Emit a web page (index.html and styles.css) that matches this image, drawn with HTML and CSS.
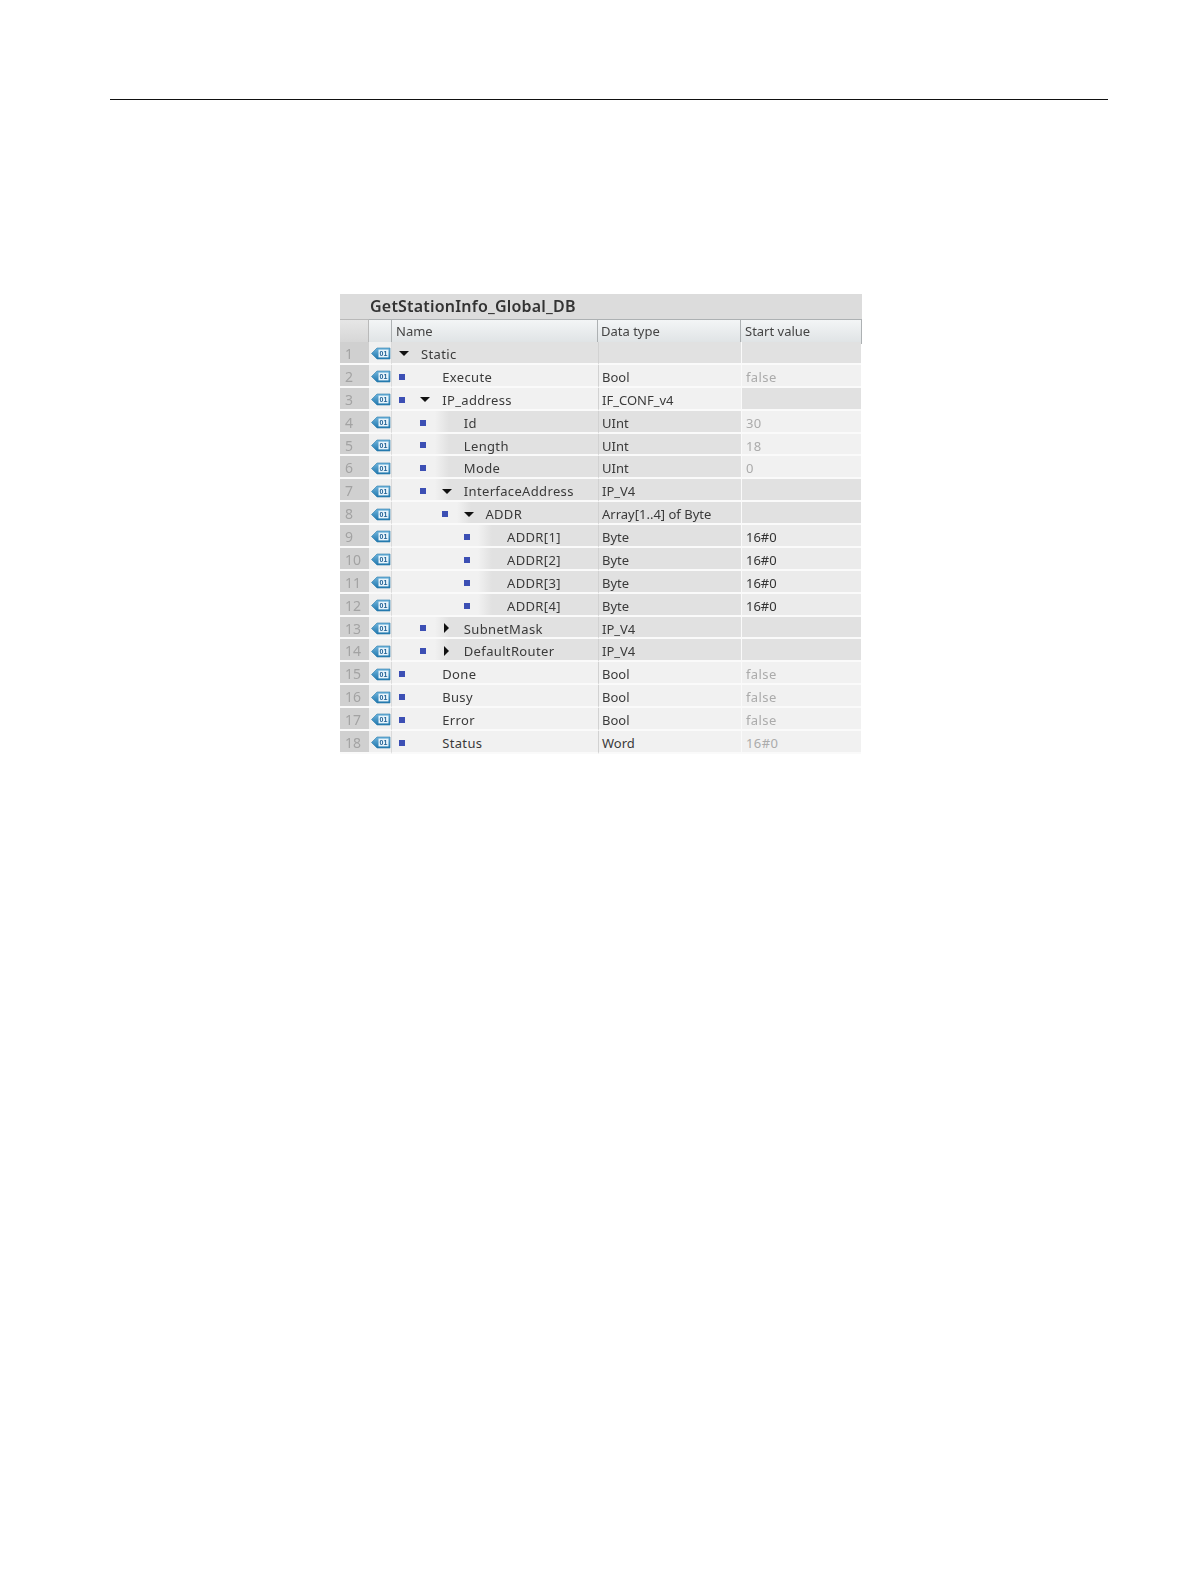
FILE: index.html
```html
<!DOCTYPE html>
<html lang="en">
<head>
<meta charset="utf-8">
<title>GetStationInfo_Global_DB</title>
<link rel="stylesheet" href="styles.css">
</head>
<body>
<svg class="defs" width="0" height="0" aria-hidden="true">
  <defs>
    <linearGradient id="tagfill" x1="0" y1="0" x2="0" y2="1">
      <stop offset="0" stop-color="#6fb4dc"/>
      <stop offset="1" stop-color="#1f76ad"/>
    </linearGradient>
    <symbol id="tag" viewBox="0 0 20 13">
      <path d="M0.5 6.5 L6 1 H19 V12 H6 Z" fill="url(#tagfill)" stroke="#2b7cab" stroke-width="0.6"/>
      <rect x="7.5" y="2.6" width="10" height="7.8" fill="#e8f4fb"/>
      <text x="12.5" y="9.3" text-anchor="middle" font-family="Liberation Sans, sans-serif" font-size="7" font-weight="700" fill="#1f5f93">01</text>
    </symbol>
  </defs>
</svg>
<div class="rule"></div>
<main class="db">
  <div class="title">GetStationInfo_Global_DB</div>
  <div class="head">
    <div class="h h-num"></div>
    <div class="h h-icon"></div>
    <div class="h">Name</div>
    <div class="h h-type">Data type</div>
    <div class="h">Start value</div>
  </div>

  <div class="row">
    <div class="num">1</div><div class="ico"><svg class="tag"><use href="#tag"/></svg></div>
    <div class="name dark"><span class="arrow down"></span><span class="label">Static</span></div>
    <div class="type dark"></div><div class="start dark"></div>
  </div>
  <div class="row">
    <div class="num">2</div><div class="ico"><svg class="tag"><use href="#tag"/></svg></div>
    <div class="name"><span class="slot"><i class="dot"></i></span><span class="slot"></span><span class="label">Execute</span></div>
    <div class="type"><span>Bool</span></div><div class="start muted">false</div>
  </div>
  <div class="row">
    <div class="num">3</div><div class="ico"><svg class="tag"><use href="#tag"/></svg></div>
    <div class="name"><span class="slot"><i class="dot"></i></span><span class="slot"><span class="arrow down"></span></span><span class="label">IP_address</span></div>
    <div class="type">IF_CONF_v4</div><div class="start dark"></div>
  </div>
  <div class="row">
    <div class="num">4</div><div class="ico"><svg class="tag"><use href="#tag"/></svg></div>
    <div class="name l1"><span class="slot"><i class="dot"></i></span><div class="inner"><span class="slot"></span><span class="label">Id</span></div></div>
    <div class="type dark">UInt</div><div class="start muted">30</div>
  </div>
  <div class="row">
    <div class="num">5</div><div class="ico"><svg class="tag"><use href="#tag"/></svg></div>
    <div class="name l1"><span class="slot"><i class="dot"></i></span><div class="inner"><span class="slot"></span><span class="label">Length</span></div></div>
    <div class="type dark">UInt</div><div class="start muted">18</div>
  </div>
  <div class="row">
    <div class="num">6</div><div class="ico"><svg class="tag"><use href="#tag"/></svg></div>
    <div class="name l1"><span class="slot"><i class="dot"></i></span><div class="inner"><span class="slot"></span><span class="label">Mode</span></div></div>
    <div class="type dark">UInt</div><div class="start muted">0</div>
  </div>
  <div class="row">
    <div class="num">7</div><div class="ico"><svg class="tag"><use href="#tag"/></svg></div>
    <div class="name l1"><span class="slot"><i class="dot"></i></span><div class="inner"><span class="slot"><span class="arrow down"></span></span><span class="label">InterfaceAddress</span></div></div>
    <div class="type dark">IP_V4</div><div class="start dark"></div>
  </div>
  <div class="row">
    <div class="num">8</div><div class="ico"><svg class="tag"><use href="#tag"/></svg></div>
    <div class="name l2"><span class="slot"><i class="dot"></i></span><div class="inner"><span class="slot"><span class="arrow down"></span></span><span class="label">ADDR</span></div></div>
    <div class="type dark">Array[1..4] of Byte</div><div class="start dark"></div>
  </div>
  <div class="row">
    <div class="num">9</div><div class="ico"><svg class="tag"><use href="#tag"/></svg></div>
    <div class="name l3"><span class="slot"><i class="dot"></i></span><div class="inner"><span class="slot"></span><span class="label">ADDR[1]</span></div></div>
    <div class="type dark">Byte</div><div class="start mid">16#0</div>
  </div>
  <div class="row">
    <div class="num">10</div><div class="ico"><svg class="tag"><use href="#tag"/></svg></div>
    <div class="name l3"><span class="slot"><i class="dot"></i></span><div class="inner"><span class="slot"></span><span class="label">ADDR[2]</span></div></div>
    <div class="type dark">Byte</div><div class="start mid">16#0</div>
  </div>
  <div class="row">
    <div class="num">11</div><div class="ico"><svg class="tag"><use href="#tag"/></svg></div>
    <div class="name l3"><span class="slot"><i class="dot"></i></span><div class="inner"><span class="slot"></span><span class="label">ADDR[3]</span></div></div>
    <div class="type dark">Byte</div><div class="start mid">16#0</div>
  </div>
  <div class="row">
    <div class="num">12</div><div class="ico"><svg class="tag"><use href="#tag"/></svg></div>
    <div class="name l3"><span class="slot"><i class="dot"></i></span><div class="inner"><span class="slot"></span><span class="label">ADDR[4]</span></div></div>
    <div class="type dark">Byte</div><div class="start mid">16#0</div>
  </div>
  <div class="row">
    <div class="num">13</div><div class="ico"><svg class="tag"><use href="#tag"/></svg></div>
    <div class="name l1"><span class="slot"><i class="dot"></i></span><div class="inner"><span class="slot"><span class="arrow right"></span></span><span class="label">SubnetMask</span></div></div>
    <div class="type dark">IP_V4</div><div class="start dark"></div>
  </div>
  <div class="row">
    <div class="num">14</div><div class="ico"><svg class="tag"><use href="#tag"/></svg></div>
    <div class="name l1"><span class="slot"><i class="dot"></i></span><div class="inner"><span class="slot"><span class="arrow right"></span></span><span class="label">DefaultRouter</span></div></div>
    <div class="type dark">IP_V4</div><div class="start dark"></div>
  </div>
  <div class="row">
    <div class="num">15</div><div class="ico"><svg class="tag"><use href="#tag"/></svg></div>
    <div class="name"><span class="slot"><i class="dot"></i></span><span class="slot"></span><span class="label">Done</span></div>
    <div class="type">Bool</div><div class="start muted">false</div>
  </div>
  <div class="row">
    <div class="num">16</div><div class="ico"><svg class="tag"><use href="#tag"/></svg></div>
    <div class="name"><span class="slot"><i class="dot"></i></span><span class="slot"></span><span class="label">Busy</span></div>
    <div class="type">Bool</div><div class="start muted">false</div>
  </div>
  <div class="row">
    <div class="num">17</div><div class="ico"><svg class="tag"><use href="#tag"/></svg></div>
    <div class="name"><span class="slot"><i class="dot"></i></span><span class="slot"></span><span class="label">Error</span></div>
    <div class="type">Bool</div><div class="start muted">false</div>
  </div>
  <div class="row">
    <div class="num">18</div><div class="ico"><svg class="tag"><use href="#tag"/></svg></div>
    <div class="name"><span class="slot"><i class="dot"></i></span><span class="slot"></span><span class="label">Status</span></div>
    <div class="type">Word</div><div class="start muted">16#0</div>
  </div>
</main>
</body>
</html>
```
FILE: styles.css
```css
* { box-sizing: border-box; }
html, body { margin: 0; padding: 0; background: #fff; }
body {
  width: 1191px;
  height: 1587px;
  overflow: hidden;
  font-family: "Noto Sans", "Open Sans", sans-serif;
  font-size: 13px;
  color: #3a3a3a;
}
.defs { display: block; height: 0; }
.rule {
  margin: 99px 0 0 110px;
  width: 998px;
  height: 1px;
  background: #111;
}
.db {
  margin: 194px 0 0 340px;
  width: 522px;
  filter: blur(0.35px);
}
.title {
  height: 25px;
  padding: 1px 0 0 30px;
  background: #dcdcdc;
  font-size: 16px;
  font-weight: 600;
  letter-spacing: 0.2px;
  line-height: 23px;
  color: #333;
}
.head, .row {
  display: grid;
  grid-template-columns: 29px 23px 206px 143px 121px;
}
.head {
  height: 23px;
  background: #dcdcdc;
}
.h {
  padding-left: 4px;
  line-height: 23px;
  background: linear-gradient(#f3f5f6, #dfe3e5);
  border: 1px solid #adb1b3;
  border-width: 1px 1px 1px 0;
  color: #444;
}
.h-num { background: linear-gradient(#e6e6e6, #d6d6d6); border-color: #b9b9b9; }
.h-icon { border-left: 0; }
.h-type { padding-left: 3px; }
.row {
  height: 22.88px;
  grid-template-rows: 22.88px;
  line-height: 16.88px;
}
.row > div {
  padding-top: 4px;
  border-bottom: 2px solid #fafafa;
}
.num {
  padding-left: 5px;
  font-size: 14px;
  color: #a3a3a3;
  background: #d0d0d0;
}
.row > .ico {
  display: flex;
  align-items: center;
  padding: 3px 0 0 2px;
  background: #f0f0f0;
  border-right: 1px solid #dadada;
}
.tag { width: 20px; height: 13px; }
.row > .name {
  display: flex;
  align-items: stretch;
  min-width: 0;
  padding-top: 0;
  background: #f1f1f1;
}
.type, .start { white-space: nowrap; }
.type {
  padding-left: 3px;
  background: #f1f1f1;
  border-left: 1px solid #d2d2d2;
}
.start {
  padding-left: 4px;
  background: #f1f1f1;
  border-left: 1px solid #fafafa;
  color: #333;
  margin-right: 1px;
}
.row > .name.dark, .type.dark, .start.dark, .inner { background: #e1e1e1; }
.start.mid { background: #ebebeb; }
.start.muted { color: #ababab; letter-spacing: 0.4px; }
.row > .name.l1 { padding-left: 21.6px; }
.row > .name.l2 { padding-left: 43.2px; }
.row > .name.l3 { padding-left: 64.8px; }
.slot {
  flex: none;
  width: 21.6px;
  padding-top: 3px;
  display: flex;
  align-items: center;
  justify-content: center;
}
.slot .arrow { margin-left: 2px; }
.name > .arrow { margin: 9px 5px 0 7px; }
.inner {
  flex: 1;
  display: flex;
  background: linear-gradient(90deg, #f1f1f1, #e1e1e1 14px);
}
.dot {
  display: block;
  width: 6px;
  height: 6px;
  margin-right: 2px;
  background: #3c4fb4;
}
.arrow {
  flex: none;
  display: block;
  width: 0;
  height: 0;
  border-style: solid;
  border-color: transparent;
}
.arrow.down {
  border-width: 5px 5.5px 0 5.5px;
  border-top-color: #111;
}
.arrow.right {
  border-width: 5.5px 0 5.5px 5.5px;
  border-left-color: #111;
}
.label {
  margin-left: 7px;
  padding-top: 4px;
  white-space: nowrap;
  letter-spacing: 0.35px;
  color: #3a3a3a;
}
```
